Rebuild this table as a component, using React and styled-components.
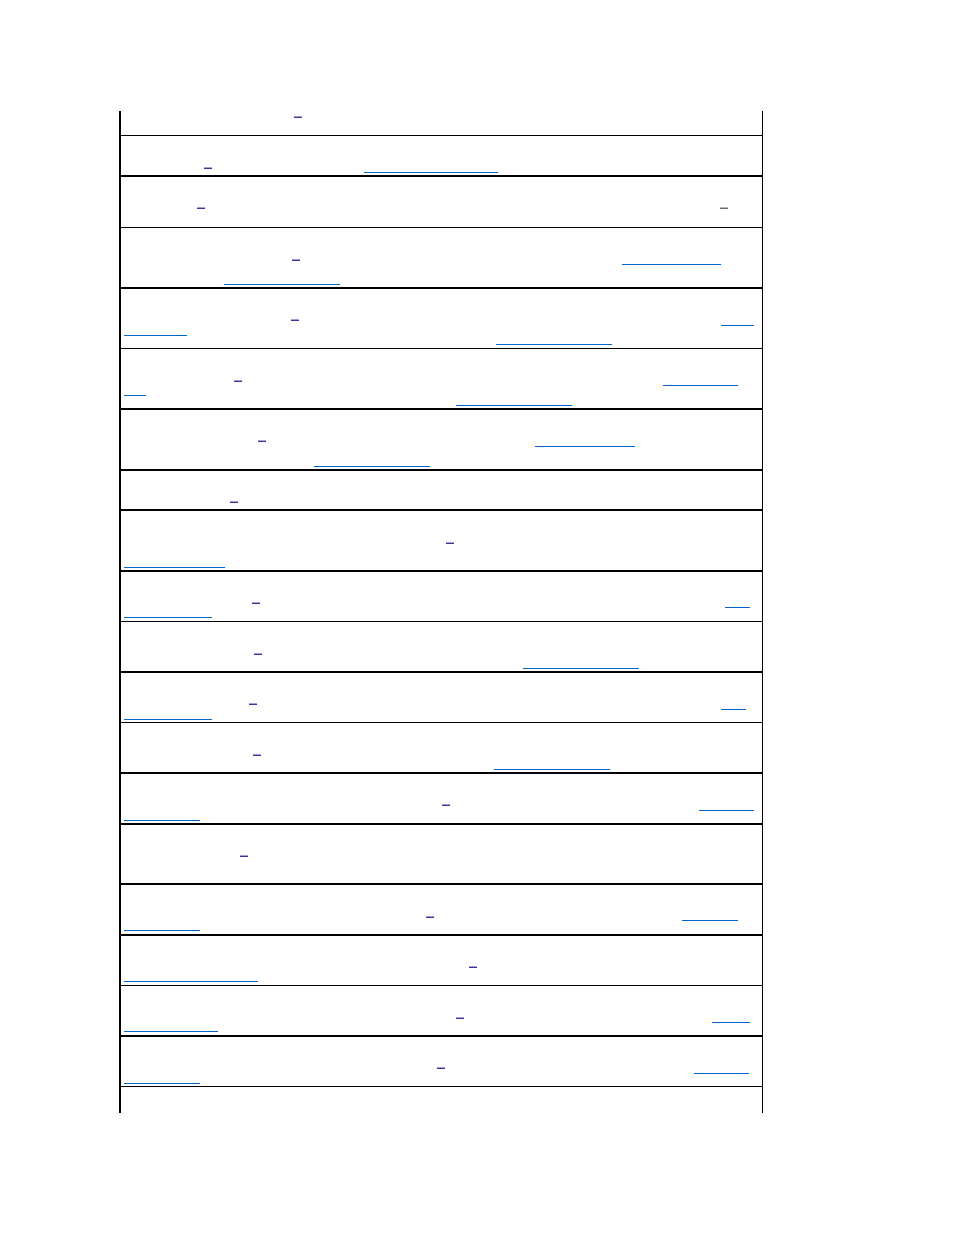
import React from "react";
import styled, { createGlobalStyle } from "styled-components";

const GlobalStyle = createGlobalStyle`
    html, body {
        margin: 0;
        padding: 0;
        background: #ffffff;
    }
    body {
        font-family: "Liberation Sans", Arial, sans-serif;
    }
`;

const Page = styled.div`
    width: 954px;
    min-height: 1235px;
    box-sizing: border-box;
    padding: 111px 0 0 119px;
`;

const Table = styled.div`
    width: 644px;
    box-sizing: border-box;
    border-left: 2px solid #000;
    border-right: 1px solid #000;

    display: flex;
    flex-direction: column;
`;

const Row = styled.div`
    height: ${(props) => props.$h}px;
    border-bottom: ${(props) => props.$b}px solid #000;

    display: flex;
    flex-direction: column;
`;

const Line = styled.div`
    margin-top: ${(props) => props.$gap}px;

    display: flex;
    flex-direction: row;
    align-items: flex-end;
`;

// short footnote link, drawn as its underline only
const Dash = styled.a`
    display: block;
    flex: none;
    width: 8px;
    height: 1px;
    margin-left: ${(props) => props.$shift}px;
    margin-bottom: ${(props) => props.$lift}px;

    background: ${(props) => (props.$grey ? "#6c6c6c" : "#36369c")};
    border-top: 1px solid ${(props) => (props.$grey ? "#b8b8b8" : "#a2a2d4")};
`;

const LinkLine = styled.a`
    display: block;
    flex: none;
    width: ${(props) => props.$w}px;
    height: 1px;
    margin-left: ${(props) => props.$shift}px;
    margin-bottom: ${(props) => props.$lift}px;

    background: #0066cc;
`;

// x / y are page pixels; d = footnote dash, g = grey dash, u = link underline
const rows = [
    { top: 111, h: 24, b: 1, lines: [[{ k: "d", x: 294, y: 116 }]] },
    { top: 136, h: 39, b: 2, lines: [[{ k: "d", x: 204, y: 167 }, { k: "u", x: 364, w: 134, y: 172 }]] },
    { top: 177, h: 50, b: 1, lines: [[{ k: "d", x: 197, y: 207 }, { k: "g", x: 720, y: 207 }]] },
    {
        top: 228, h: 59, b: 2, lines: [
            [{ k: "d", x: 292, y: 259 }, { k: "u", x: 622, w: 99, y: 264 }],
            [{ k: "u", x: 224, w: 116, y: 284 }],
        ],
    },
    {
        top: 289, h: 59, b: 1, lines: [
            [{ k: "d", x: 291, y: 319 }, { k: "u", x: 721, w: 33, y: 325 }],
            [{ k: "u", x: 124, w: 63, y: 335 }],
            [{ k: "u", x: 496, w: 116, y: 344 }],
        ],
    },
    {
        top: 349, h: 59, b: 2, lines: [
            [{ k: "d", x: 234, y: 380 }, { k: "u", x: 663, w: 75, y: 385 }],
            [{ k: "u", x: 124, w: 22, y: 395 }],
            [{ k: "u", x: 456, w: 116, y: 405 }],
        ],
    },
    {
        top: 410, h: 59, b: 2, lines: [
            [{ k: "d", x: 258, y: 440 }, { k: "u", x: 535, w: 100, y: 446 }],
            [{ k: "u", x: 314, w: 116, y: 466 }],
        ],
    },
    { top: 471, h: 38, b: 2, lines: [[{ k: "d", x: 230, y: 501 }]] },
    {
        top: 511, h: 59, b: 2, lines: [
            [{ k: "d", x: 446, y: 542 }],
            [{ k: "u", x: 124, w: 101, y: 567 }],
        ],
    },
    {
        top: 572, h: 49, b: 1, lines: [
            [{ k: "d", x: 252, y: 602 }, { k: "u", x: 725, w: 25, y: 607 }],
            [{ k: "u", x: 124, w: 88, y: 617 }],
        ],
    },
    {
        top: 622, h: 49, b: 2, lines: [
            [{ k: "d", x: 254, y: 653 }],
            [{ k: "u", x: 523, w: 116, y: 668 }],
        ],
    },
    {
        top: 673, h: 49, b: 1, lines: [
            [{ k: "d", x: 249, y: 703 }, { k: "u", x: 721, w: 25, y: 709 }],
            [{ k: "u", x: 124, w: 88, y: 719 }],
        ],
    },
    {
        top: 723, h: 49, b: 2, lines: [
            [{ k: "d", x: 253, y: 754 }],
            [{ k: "u", x: 494, w: 116, y: 769 }],
        ],
    },
    {
        top: 774, h: 49, b: 2, lines: [
            [{ k: "d", x: 442, y: 804 }, { k: "u", x: 699, w: 55, y: 810 }],
            [{ k: "u", x: 124, w: 76, y: 820 }],
        ],
    },
    { top: 825, h: 58, b: 2, lines: [[{ k: "d", x: 240, y: 855 }]] },
    {
        top: 885, h: 49, b: 2, lines: [
            [{ k: "d", x: 426, y: 916 }, { k: "u", x: 682, w: 56, y: 920 }],
            [{ k: "u", x: 124, w: 76, y: 930 }],
        ],
    },
    {
        top: 936, h: 49, b: 1, lines: [
            [{ k: "d", x: 469, y: 966 }],
            [{ k: "u", x: 124, w: 134, y: 981 }],
        ],
    },
    {
        top: 986, h: 49, b: 2, lines: [
            [{ k: "d", x: 456, y: 1017 }, { k: "u", x: 712, w: 38, y: 1022 }],
            [{ k: "u", x: 124, w: 94, y: 1031 }],
        ],
    },
    {
        top: 1037, h: 49, b: 1, lines: [
            [{ k: "d", x: 437, y: 1067 }, { k: "u", x: 694, w: 55, y: 1073 }],
            [{ k: "u", x: 124, w: 76, y: 1083 }],
        ],
    },
    { top: 1087, h: 26, b: 0, lines: [] },
];

const CONTENT_LEFT = 121;

const markHeight = (m) => (m.k === "u" ? 1 : 2);
const markWidth = (m) => (m.k === "u" ? m.w : 8);

const TableRow = ({ row }) => {
    let cursor = row.top;

    return (
        <Row $h={row.h} $b={row.b}>
            {row.lines.map((marks, li) => {
                const lineTop = Math.min(...marks.map((m) => m.y));
                const lineBottom = Math.max(...marks.map((m) => m.y + markHeight(m)));
                const gap = lineTop - cursor;
                cursor = lineBottom;

                let right = CONTENT_LEFT;

                return (
                    <Line key={li} $gap={gap}>
                        {marks.map((m, mi) => {
                            const shift = m.x - right;
                            right = m.x + markWidth(m);
                            const lift = lineBottom - (m.y + markHeight(m));

                            if (m.k === "u") {
                                return <LinkLine key={mi} href="#" $w={m.w} $shift={shift} $lift={lift} />;
                            }
                            return <Dash key={mi} href="#" $grey={m.k === "g"} $shift={shift} $lift={lift} />;
                        })}
                    </Line>
                );
            })}
        </Row>
    );
};

const App = () => {
    return (
        <>
            <GlobalStyle />
            <Page>
                <Table>
                    {rows.map((row, i) => (
                        <TableRow key={i} row={row} />
                    ))}
                </Table>
            </Page>
        </>
    );
};

export default App;
